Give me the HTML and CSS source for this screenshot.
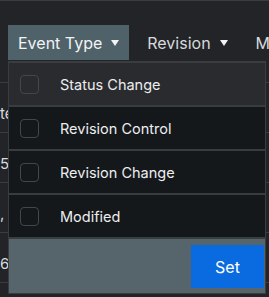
FILE: index.html
```html
<!doctype html>
<html lang="en">

<head>
    <meta charset="utf-8" />
    <meta name="viewport" content="width=device-width, initial-scale=1">
    <title>Event filter</title>
    <link rel="stylesheet" href="styles.css">
</head>

<body>
    <div class="toolbar">
        <button type="button" class="tab tab-active">Event Type <span class="caret"></span></button>
        <button type="button" class="tab">Revision <span class="caret"></span></button>
        <button type="button" class="tab">Modified</button>
    </div>

    <div class="table">
        <div class="table-row"></div>
        <div class="table-row"><span class="cell">te</span></div>
        <div class="table-row"><span class="cell">5,</span></div>
        <div class="table-row"><span class="cell">,</span></div>
        <div class="table-row"><span class="cell">6,</span></div>
    </div>

    <div class="dropdown">
        <label class="option option-hover"><span class="check"></span>Status Change</label>
        <label class="option"><span class="check"></span>Revision Control</label>
        <label class="option"><span class="check"></span>Revision Change</label>
        <label class="option"><span class="check"></span>Modified</label>
        <div class="dropdown-footer">
            <button type="button" class="set-btn">Set</button>
        </div>
    </div>
</body>

</html>
```

FILE: styles.css
```css
body {
    margin: 0;
    background-color: #232427;
    font-family: Inter, "Noto Sans", sans-serif;
    color: #e8e9ea;
    border-top: 1px solid #3a3b3e;
    height: 296px;
    overflow: hidden;
    position: relative;
}

.toolbar {
    display: flex;
    gap: 8px;
    padding: 24px 0 0 8px;
    white-space: nowrap;
}

.tab {
    display: flex;
    align-items: center;
    gap: 9px;
    height: 35px;
    padding: 0 10px;
    border: none;
    background: none;
    color: #d6dadc;
    font-family: inherit;
    font-size: 16px;
}

.tab-active {
    background-color: #4f6169;
    color: #f2f4f5;
}

.caret {
    width: 0;
    height: 0;
    border-left: 4px solid transparent;
    border-right: 4px solid transparent;
    border-top: 6px solid #f2f4f5;
}

.table {
    display: flex;
    flex-direction: column;
}

.table-row {
    height: 49px;
    border-bottom: 1px solid #3a3c3f;
    display: flex;
    align-items: center;
    font-size: 15px;
    color: #d8dadc;
}

.table-row:first-child {
    height: 22px;
}

.cell {
    padding-top: 12px;
}

.dropdown {
    position: absolute;
    top: 60px;
    left: 8px;
    width: 258px;
    border: 1px solid #3a3c3f;
    border-top-width: 2px;
    box-sizing: border-box;
    background-color: #15181b;
}

.option {
    display: flex;
    align-items: center;
    gap: 21px;
    height: 42px;
    padding-left: 11px;
    border-bottom: 2px solid #3a3d40;
    font-size: 14.5px;
    color: #eceeef;
}

.option-hover {
    background-color: #2a2b2e;
}

.check {
    width: 17px;
    height: 17px;
    border: 1px solid #43474b;
    border-radius: 4px;
}

.dropdown-footer {
    display: flex;
    justify-content: flex-end;
    height: 54px;
    padding: 6px 1px 5px 0;
    box-sizing: border-box;
    background-color: #56656c;
}

.set-btn {
    width: 73px;
    border: none;
    background-color: #0a6be0;
    color: white;
    font-family: inherit;
    font-size: 16px;
}
```
